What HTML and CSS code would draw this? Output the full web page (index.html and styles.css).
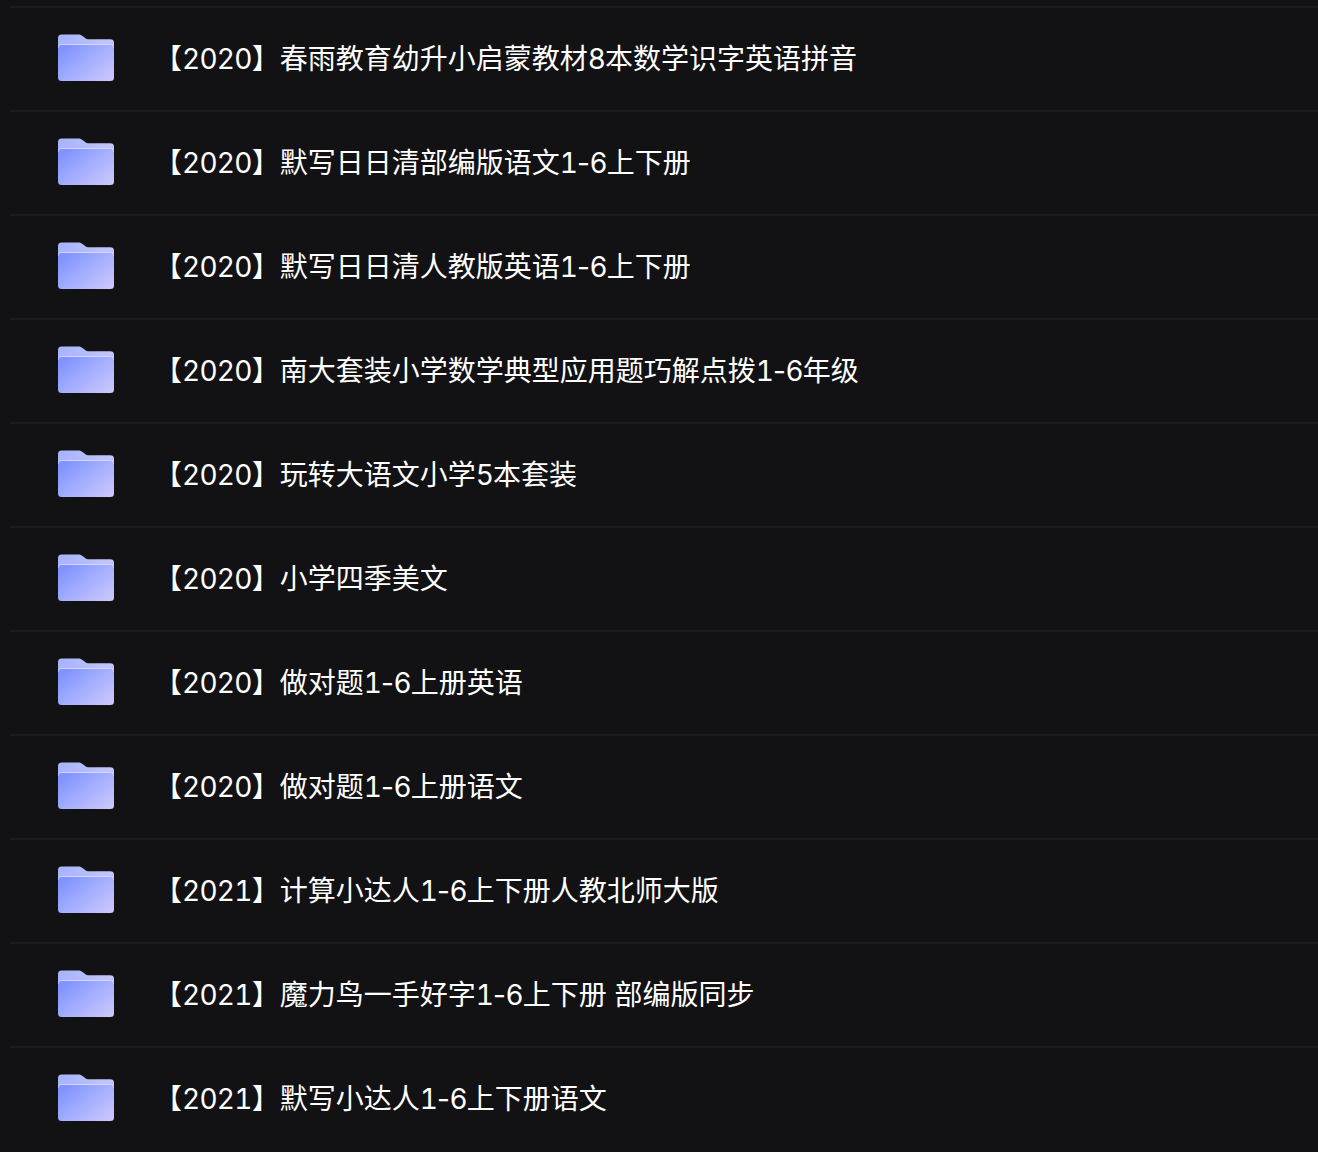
FILE: index.html
```html
<!DOCTYPE html>
<html lang="zh-CN">
<head>
    <meta charset="UTF-8">
    <meta name="viewport" content="width=device-width, initial-scale=1.0">
    <link rel="stylesheet" href="styles.css">
</head>

<body>
    <svg class="defs" width="0" height="0">
        <defs>
            <linearGradient id="folder-front" x1="0" y1="0.2" x2="1" y2="1">
                <stop offset="0" stop-color="#7f92ff"/>
                <stop offset="0.45" stop-color="#a3aeff"/>
                <stop offset="1" stop-color="#cfc9fb"/>
            </linearGradient>
            <linearGradient id="folder-back" x1="0" y1="0" x2="1" y2="0">
                <stop offset="0" stop-color="#a6b3ff"/>
                <stop offset="1" stop-color="#c4c6f8"/>
            </linearGradient>
            <symbol id="folder" viewBox="0 0 56 47">
                <path d="M0 4a3.500 3.500 0 0 1 3.500-3.500h17c1.800 0 2.800 .6 4 1.500l3 2.300c1 .7 1.800 1 3 1h22a3.500 3.500 0 0 1 3.500 3.500v6H0z" fill="url(#folder-back)"/>
                <path d="M0 14c0-2 1.500-3.500 3.500-3.500h49c2 0 3.500 1.500 3.500 3.500v29.500a3.500 3.500 0 0 1-3.500 3.500h-49A3.500 3.500 0 0 1 0 43.500z" fill="url(#folder-front)"/>
                <path d="M0 14c0-2 1.500-3.500 3.500-3.500h49c2 0 3.500 1.500 3.500 3.500" fill="none" stroke="#d3d7ff" stroke-width="1"/>
            </symbol>
        </defs>
    </svg>

    <ul class="file-list">
        <li class="file-row"><svg class="folder-icon"><use href="#folder"/></svg><span class="file-name">【<span class="num">2020</span>】春雨教育幼升小启蒙教材<span class="num">8</span>本数学识字英语拼音</span></li>
        <li class="file-row"><svg class="folder-icon"><use href="#folder"/></svg><span class="file-name">【<span class="num">2020</span>】默写日日清部编版语文<span class="num">1</span><span class="dash">-</span><span class="num">6</span>上下册</span></li>
        <li class="file-row"><svg class="folder-icon"><use href="#folder"/></svg><span class="file-name">【<span class="num">2020</span>】默写日日清人教版英语<span class="num">1</span><span class="dash">-</span><span class="num">6</span>上下册</span></li>
        <li class="file-row"><svg class="folder-icon"><use href="#folder"/></svg><span class="file-name">【<span class="num">2020</span>】南大套装小学数学典型应用题巧解点拨<span class="num">1</span><span class="dash">-</span><span class="num">6</span>年级</span></li>
        <li class="file-row"><svg class="folder-icon"><use href="#folder"/></svg><span class="file-name">【<span class="num">2020</span>】玩转大语文小学<span class="num">5</span>本套装</span></li>
        <li class="file-row"><svg class="folder-icon"><use href="#folder"/></svg><span class="file-name">【<span class="num">2020</span>】小学四季美文</span></li>
        <li class="file-row"><svg class="folder-icon"><use href="#folder"/></svg><span class="file-name">【<span class="num">2020</span>】做对题<span class="num">1</span><span class="dash">-</span><span class="num">6</span>上册英语</span></li>
        <li class="file-row"><svg class="folder-icon"><use href="#folder"/></svg><span class="file-name">【<span class="num">2020</span>】做对题<span class="num">1</span><span class="dash">-</span><span class="num">6</span>上册语文</span></li>
        <li class="file-row"><svg class="folder-icon"><use href="#folder"/></svg><span class="file-name">【<span class="num">2021</span>】计算小达人<span class="num">1</span><span class="dash">-</span><span class="num">6</span>上下册人教北师大版</span></li>
        <li class="file-row"><svg class="folder-icon"><use href="#folder"/></svg><span class="file-name">【<span class="num">2021</span>】魔力鸟一手好字<span class="num">1</span><span class="dash">-</span><span class="num">6</span>上下册 部编版同步</span></li>
        <li class="file-row"><svg class="folder-icon"><use href="#folder"/></svg><span class="file-name">【<span class="num">2021</span>】默写小达人<span class="num">1</span><span class="dash">-</span><span class="num">6</span>上下册语文</span></li>
    </ul>
</body>

</html>
```

FILE: styles.css
```css
html {
    background-color: #121214;
}

body {
    font-family: Inter, "Noto Sans CJK SC", sans-serif;
    margin: 0;
    padding: 0;
    height: 1152px;
    overflow: hidden;
    background-color: #121214;
}

.defs {
    display: block;
    height: 0;
}

.file-list {
    list-style-type: none;
    margin: 0;
    padding: 6px 0 0 10px;
}

.file-row {
    display: flex;
    align-items: center;
    height: 104px;
    box-sizing: border-box;
    border-top: 2px solid #1b1c1f;
    padding: 0 0 3px 48px;
}

.folder-icon {
    width: 56px;
    height: 47px;
    flex: none;
}

.file-name {
    margin: 0 0 2px 40px;
    font-size: 28px;
    font-variant-numeric: tabular-nums;
    color: #ffffff;
    white-space: nowrap;
}

.num {
    letter-spacing: -0.75px;
}

.dash {
    font-variant-numeric: normal;
    letter-spacing: -0.5px;
}
```
